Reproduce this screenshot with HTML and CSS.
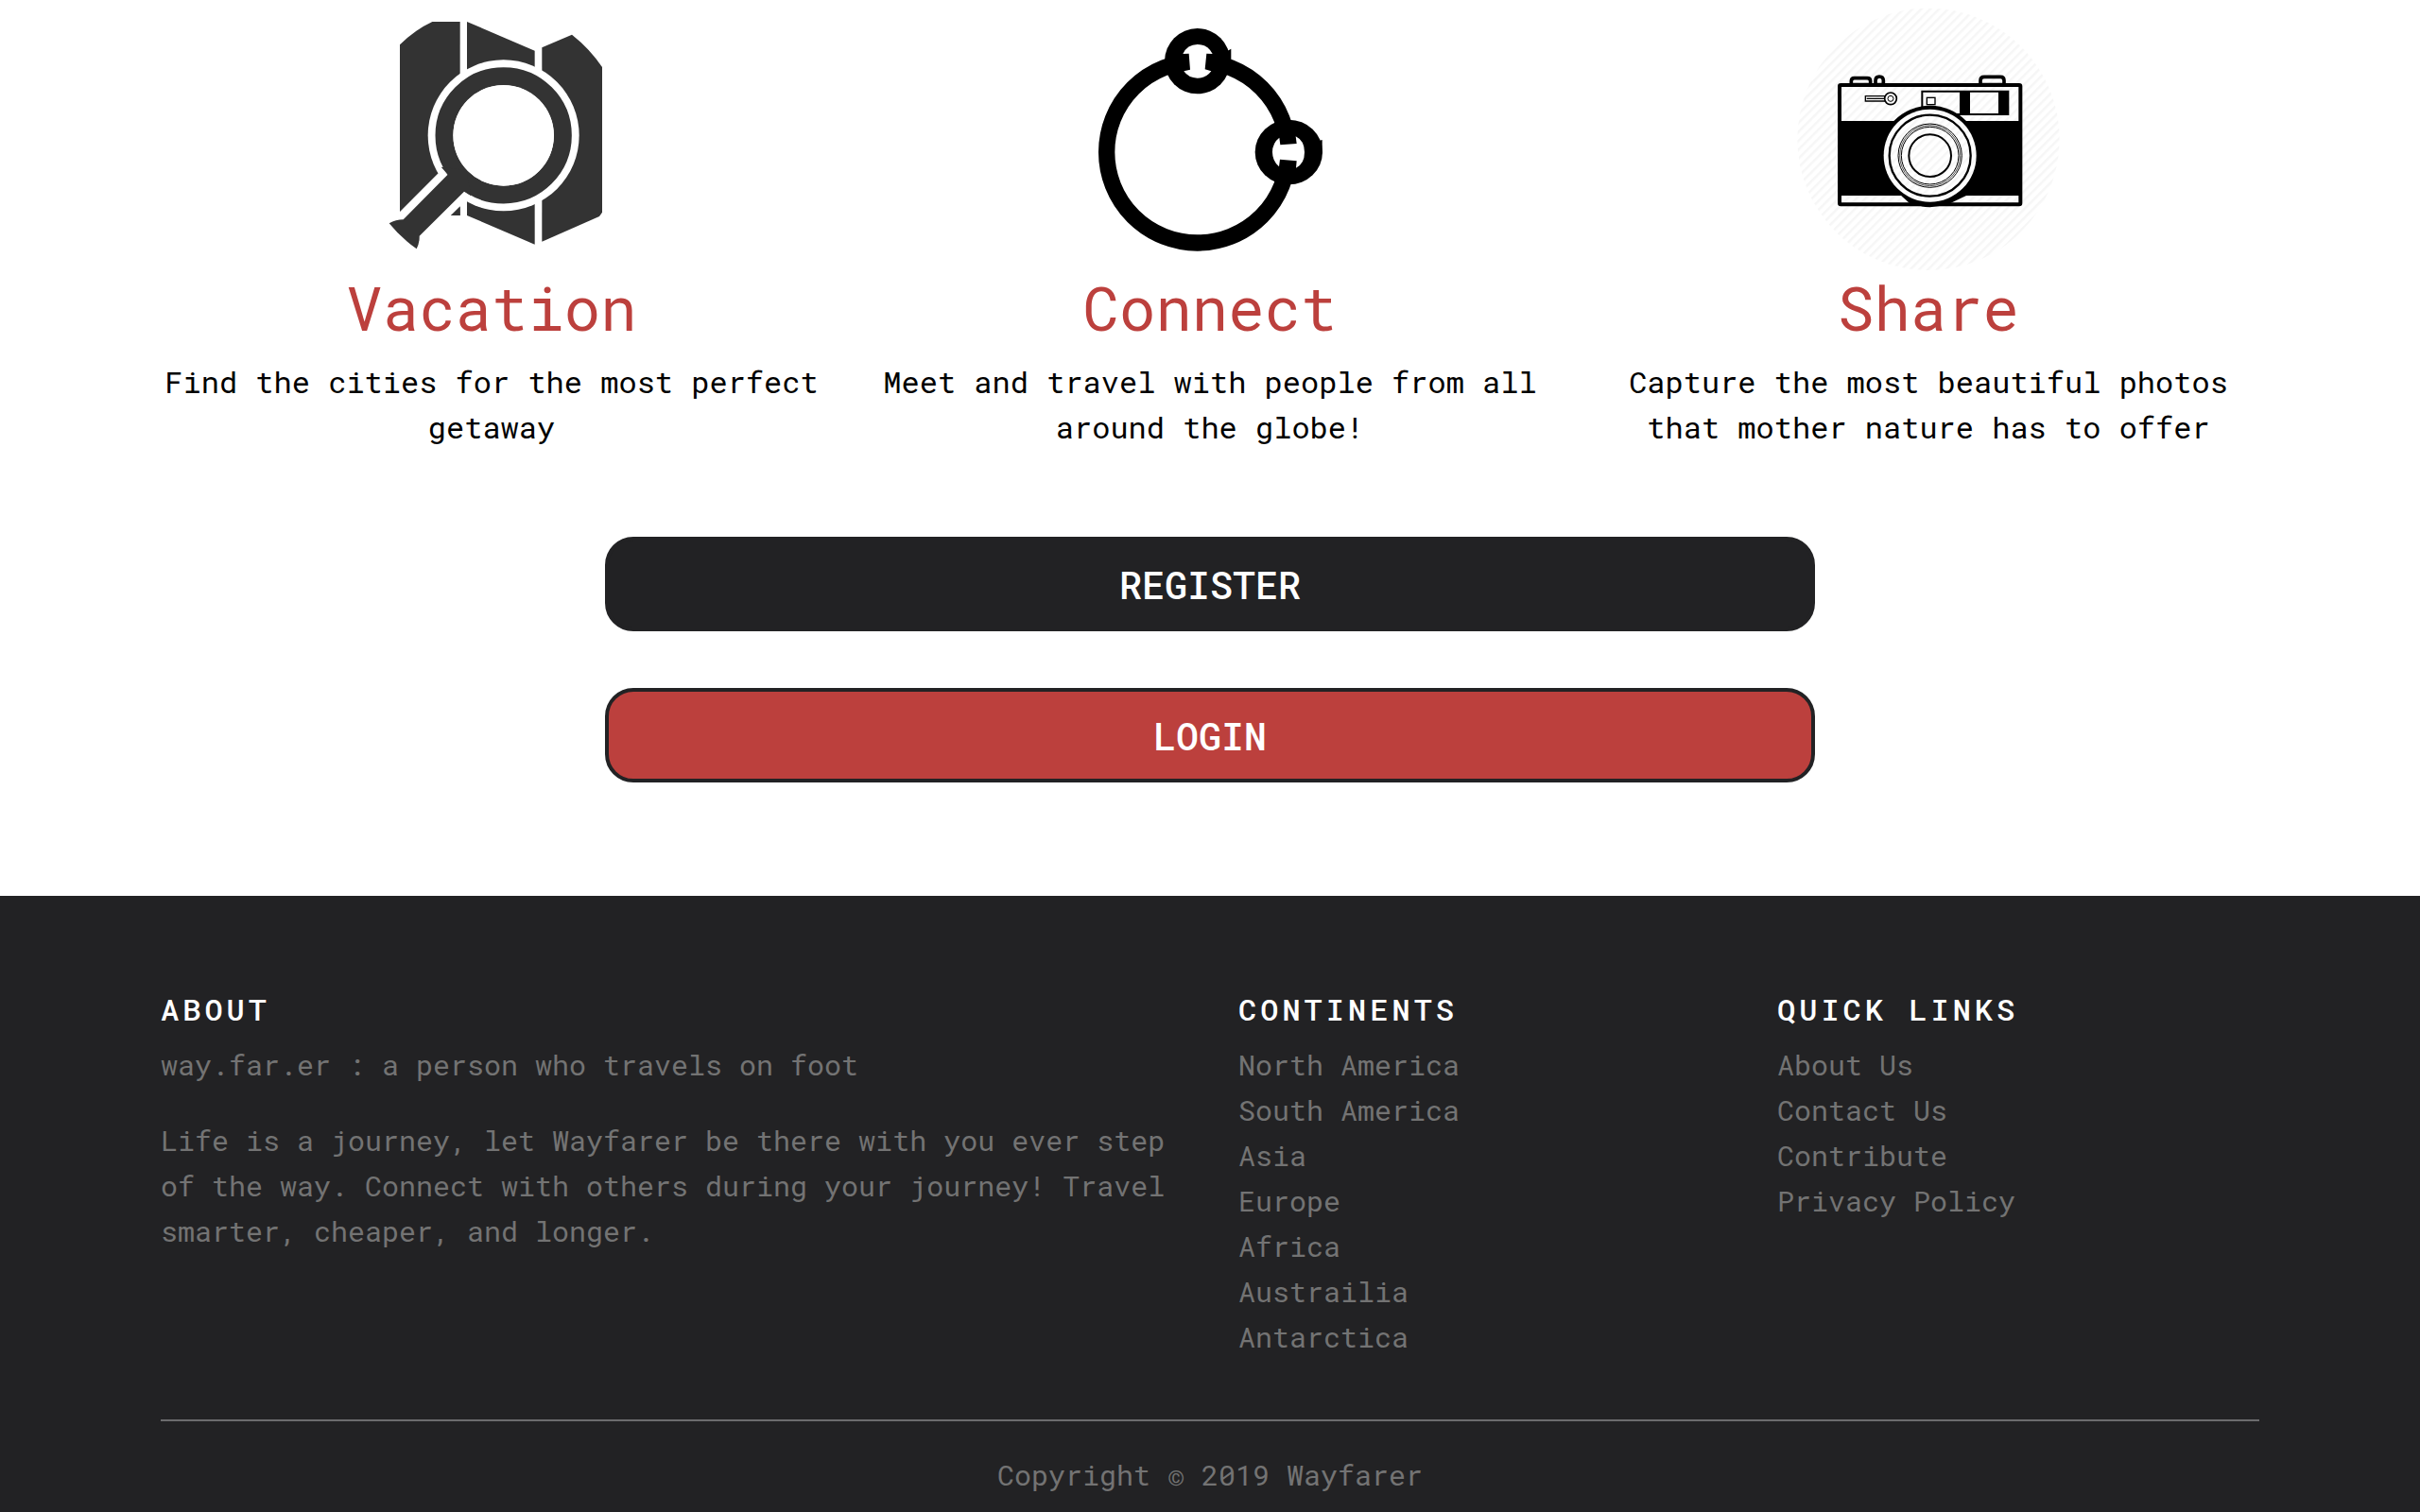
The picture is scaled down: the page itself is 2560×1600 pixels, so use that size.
FILE: index.html
```html
<!DOCTYPE html>
<html lang="en">
<head>
<meta charset="utf-8">
<meta name="viewport" content="width=device-width, initial-scale=1">
<title>Wayfarer</title>
<link rel="stylesheet" href="styles.css">
</head>
<body>
<main>
  <section class="container features">
    <article class="feature">
      <svg class="feature-icon" viewBox="60 24 840 840" aria-hidden="true">
        <g fill="#333">
          <path d="M189 142Q236 95 292 69H380V684H351L189 675Z"/>
          <path d="M402 69L617 161V776L402 684Z"/>
          <path d="M640 151L735 110Q792 155 831 213V674L822 687L640 767Z"/>
        </g>
        <circle cx="518" cy="430" r="240" fill="#fff"/>
        <path d="M311 550L160 701L250 785L351 684L400 640Z" fill="#fff"/>
        <path d="M351 684L380 655V684Z" fill="#333"/>
        <circle cx="518" cy="430" r="188" fill="none" stroke="#333" stroke-width="57"/>
        <path d="M320 530L341 554L200 697Q176 697 155 709Q190 753 242 790Q252 770 251 749L393 608L415 622L400 540Z" fill="#333"/>
        <circle cx="518" cy="430" r="160" fill="#fff"/>
      </svg>
      <h2>Vacation</h2>
      <p>Find the cities for the most perfect getaway</p>
    </article>
    <article class="feature">
      <svg class="feature-icon" viewBox="60 24 840 840" aria-hidden="true">
        <circle cx="440" cy="483" r="288" fill="none" stroke="#000" stroke-width="52"/>
        <circle cx="440" cy="194" r="104"/>
        <path d="M530 164L547 155V194Z"/>
        <ellipse cx="730" cy="483" rx="107" ry="103"/>
        <path d="M815 450L836 444V490Z"/>
        <path fill="#fff" d="M394 171Q408 141 440 141Q473 141 488 171L469 170L464 220L484 226Q468 248 440 248Q412 248 397 226L417 221L413 170Z"/>
        <path fill="#fff" d="M700 437L703 460L755 456L752 433Q780 447 780 483Q780 520 753 533L755 511L702 506L699 529Q678 511 678 483Q678 454 700 437Z"/>
      </svg>
      <h2>Connect</h2>
      <p>Meet and travel with people from all around the globe!</p>
    </article>
    <article class="feature">
      <svg class="feature-icon" viewBox="60 24 840 840" aria-hidden="true">
        <defs>
          <pattern id="stripes" width="20" height="20" patternUnits="userSpaceOnUse" patternTransform="rotate(45)">
            <rect width="7" height="20" fill="#000" fill-opacity=".035"/>
          </pattern>
        </defs>
        <g fill="#fff" stroke="#000" stroke-width="11" stroke-linejoin="round">
          <path d="M235 269V258Q235 248 245 248H286Q296 248 296 258V269Z"/>
          <path d="M312 269V256Q312 243 324 243Q337 243 337 256V269Z"/>
          <path d="M645 269V256Q645 244 657 244H709Q720 244 720 256V269Z"/>
          <rect x="198" y="270" width="574" height="379" rx="4" stroke-width="12"/>
        </g>
        <path d="M198 384H772V621H198Z"/>
        <path d="M460 290H733V363H460Z" fill="#fff" stroke="#000" stroke-width="6"/>
        <path d="M579 290H612V363H579ZM702 290H733V363H702Z"/>
        <rect x="475" y="310" width="26" height="22" fill="#fff" stroke="#000" stroke-width="4"/>
        <path d="M280 305H346V321H280ZM284 313H346" fill="#fff" stroke="#000" stroke-width="4"/>
        <circle cx="360" cy="313" r="19" fill="#fff" stroke="#000" stroke-width="5"/>
        <circle cx="360" cy="313" r="9" fill="#fff" stroke="#000" stroke-width="3"/>
        <path d="M370 384A160 160 0 0 1 600 384V621L550 645H420L370 600Z"/>
        <circle cx="485" cy="494" r="147" fill="#fff"/>
        <path d="M372 388A157 157 0 0 1 598 388A152 152 0 0 0 372 388Z"/>
        <path d="M388 621A158 158 0 0 0 430 647H540A158 158 0 0 0 582 621A147 147 0 0 1 388 621Z"/>
        <g fill="none" stroke="#000">
          <circle cx="485" cy="494" r="129" stroke-width="7"/>
          <circle cx="485" cy="494" r="101" stroke-width="3"/>
          <circle cx="485" cy="494" r="96" stroke-width="2"/>
          <circle cx="485" cy="494" r="91" stroke-width="3"/>
          <circle cx="485" cy="494" r="67" stroke-width="6"/>
        </g>
        <circle cx="480" cy="442" r="416" fill="url(#stripes)"/>
      </svg>
      <h2>Share</h2>
      <p>Capture the most beautiful photos that mother nature has to offer</p>
    </article>
  </section>
  <div class="actions">
    <button type="button" class="btn btn-dark">REGISTER</button>
    <button type="button" class="btn btn-red">LOGIN</button>
  </div>
</main>
<footer class="site-footer">
  <div class="container footer-columns">
    <section class="footer-column">
      <h6>ABOUT</h6>
      <p>way.far.er : a person who travels on foot</p>
      <p>Life is a journey, let Wayfarer be there with you ever step of the way. Connect with others during your journey! Travel smarter, cheaper, and longer.</p>
    </section>
    <nav class="footer-column" aria-label="Continents">
      <h6>CONTINENTS</h6>
      <ul>
        <li><a href="#">North America</a></li>
        <li><a href="#">South America</a></li>
        <li><a href="#">Asia</a></li>
        <li><a href="#">Europe</a></li>
        <li><a href="#">Africa</a></li>
        <li><a href="#">Austrailia</a></li>
        <li><a href="#">Antarctica</a></li>
      </ul>
    </nav>
    <nav class="footer-column" aria-label="Quick links">
      <h6>QUICK LINKS</h6>
      <ul>
        <li><a href="#">About Us</a></li>
        <li><a href="#">Contact Us</a></li>
        <li><a href="#">Contribute</a></li>
        <li><a href="#">Privacy Policy</a></li>
      </ul>
    </nav>
  </div>
  <div class="container footer-bottom">
    <p>Copyright © 2019 Wayfarer</p>
  </div>
</footer>
</body>
</html>
```
FILE: styles.css
```css
* {
  box-sizing: border-box;
}

body {
  margin: 0;
  background: #fff;
  color: #000;
  font-family: "Roboto Mono", "DejaVu Sans Mono", monospace;
  font-size: 30px;
  font-weight: 450;
  line-height: 48px;
}

h2,
h6,
p,
ul {
  margin: 0;
  padding: 0;
  font-weight: inherit;
}

.container {
  max-width: 2280px;
  margin: 0 auto;
}

.features {
  display: grid;
  grid-template-columns: repeat(3, 1fr);
  padding-top: 8px;
}

.feature {
  padding: 0 30px;
  text-align: center;
  font-size: 32px;
}

.feature-icon {
  display: block;
  width: 280px;
  height: 280px;
  margin: 0 auto 2px;
}

.feature h2 {
  margin-bottom: 20px;
  color: #bc403d;
  font-size: 64px;
  line-height: 70px;
}

.actions {
  display: flex;
  flex-direction: column;
  gap: 60px;
  width: 50%;
  margin: 0 auto;
  padding: 92px 0 120px;
}

.btn {
  height: 100px;
  padding: 0;
  border: 4px solid #222224;
  border-radius: 30px;
  color: #fff;
  font-family: inherit;
  font-size: 40px;
  font-weight: 500;
  cursor: pointer;
}

.btn-dark {
  background: #222224;
}

.btn-red {
  background: #bc403d;
}

.site-footer {
  padding: 101px 0 15px;
  background: #222224;
  color: #737373;
}

.footer-columns {
  display: grid;
  grid-template-columns: 2fr 1fr 1fr;
}

.footer-column {
  padding: 0 30px;
}

.footer-column h6 {
  margin-bottom: 16px;
  color: #fff;
  font-size: 32px;
  font-weight: 500;
  line-height: 38px;
  letter-spacing: 4px;
}

.footer-column p + p {
  margin-top: 32px;
}

.footer-column ul {
  list-style: none;
}

.footer-column a {
  color: inherit;
  text-decoration: none;
}

.footer-bottom {
  padding: 63px 30px 0;
}

.footer-bottom p {
  padding-top: 33px;
  border-top: 2px solid #6c6c6e;
  text-align: center;
}
```
